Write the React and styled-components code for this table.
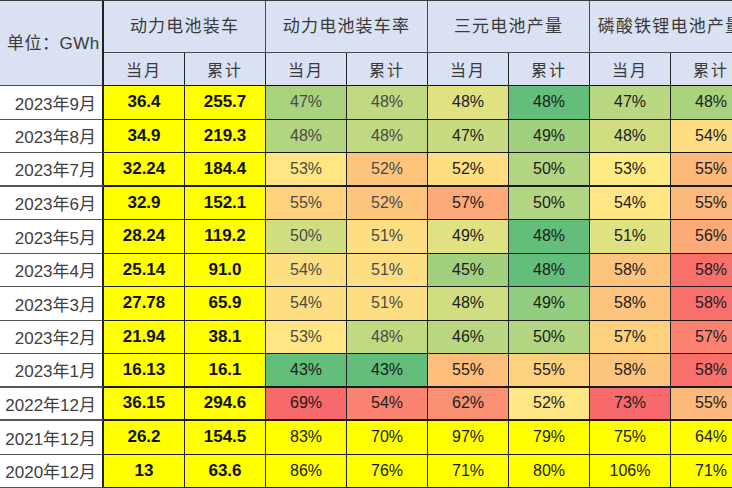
import React from 'react';
import styled, { createGlobalStyle, css } from 'styled-components';

const GlobalStyle = createGlobalStyle`
  body {
    margin: 0;
    overflow: hidden;
    background: #ffffff;
    font-family: "Liberation Sans", "Noto Sans CJK SC", sans-serif;
  }
`;

const groups = ['动力电池装车', '动力电池装车率', '三元电池产量', '磷酸铁锂电池产量'];

// tone: -1 green, 0 yellow, 1 red (excel style colour scale)
const rows = [
  { date: '2023年9月', month: '36.4', total: '255.7', rates: [['47%', -0.55], ['48%', -0.4], ['48%', -0.2], ['48%', -1], ['47%', -0.45], ['48%', -0.55]] },
  { date: '2023年8月', month: '34.9', total: '219.3', rates: [['48%', -0.5], ['48%', -0.4], ['47%', -0.35], ['49%', -0.6], ['48%', -0.3], ['54%', 0.1]] },
  { date: '2023年7月', month: '32.24', total: '184.4', heavy: true, rates: [['53%', 0.05], ['52%', 0.3], ['52%', 0.1], ['50%', -0.5], ['53%', 0], ['55%', 0.4]] },
  { date: '2023年6月', month: '32.9', total: '152.1', rates: [['55%', 0.2], ['52%', 0.3], ['57%', 0.5], ['50%', -0.5], ['54%', 0.05], ['55%', 0.4]] },
  { date: '2023年5月', month: '28.24', total: '119.2', rates: [['50%', -0.3], ['51%', 0.1], ['49%', -0.2], ['48%', -1], ['51%', -0.2], ['56%', 0.5]] },
  { date: '2023年4月', month: '25.14', total: '91.0', rates: [['54%', 0.1], ['51%', 0.1], ['45%', -0.6], ['48%', -1], ['58%', 0.3], ['58%', 0.95]] },
  { date: '2023年3月', month: '27.78', total: '65.9', rates: [['54%', 0.1], ['51%', 0.1], ['48%', -0.3], ['49%', -0.7], ['58%', 0.3], ['58%', 0.95]] },
  { date: '2023年2月', month: '21.94', total: '38.1', rates: [['53%', 0.05], ['48%', -0.4], ['46%', -0.45], ['50%', -0.5], ['57%', 0.2], ['57%', 0.8]] },
  { date: '2023年1月', month: '16.13', total: '16.1', heavy: true, dark: true, rates: [['43%', -1], ['43%', -1], ['55%', 0.35], ['55%', 0.2], ['58%', 0.3], ['58%', 0.95]] },
  { date: '2022年12月', month: '36.15', total: '294.6', heavy: true, dark: true, rates: [['69%', 1], ['54%', 0.8], ['62%', 0.7], ['52%', 0.05], ['73%', 1], ['55%', 0.4]] },
  { date: '2021年12月', month: '26.2', total: '154.5', dark: true, rates: [['83%'], ['70%'], ['97%'], ['79%'], ['75%'], ['64%']] },
  { date: '2020年12月', month: '13', total: '63.6', dark: true, rates: [['86%'], ['76%'], ['71%'], ['80%'], ['106%'], ['71%']] },
];

const GREEN = [0x63, 0xbe, 0x7b];
const YELLOW = [0xff, 0xeb, 0x84];
const RED = [0xf8, 0x69, 0x6b];

const toneColor = (tone) => {
  if (tone === undefined) return '#ffff00';
  const from = tone < 0 ? GREEN : RED;
  const t = 1 - Math.abs(tone);
  const c = from.map((v, i) => Math.round(v + (YELLOW[i] - v) * t));
  return `rgb(${c.join(',')})`;
};

const Sheet = styled.div`
  display: grid;
  grid-template-columns: 104px repeat(8, 81px);
  grid-template-rows: 52px 33px repeat(12, 33.5px);
  width: 752px;
  border-top: 1px solid #3a3a3a;
`;

const Cell = styled.div`
  box-sizing: border-box;
  display: flex;
  align-items: center;
  justify-content: center;
  border-right: 1px solid #222;
  border-bottom: ${(p) => (p.$heavy ? '2px' : '1px')} solid #1a1a1a;
  font-size: 17px;
  white-space: nowrap;
  overflow: hidden;
`;

const HeadCell = styled(Cell)`
  background: #d9e1f2;
  color: #3a3a3a;
  border-right-color: #4a4a4a;
  border-bottom-color: #4a4a4a;
`;

const Corner = styled(HeadCell)`
  grid-row: span 2;
  justify-content: flex-start;
  padding-left: 7px;
  padding-bottom: 4px;
  border-right: 2px solid #222;
  letter-spacing: 0.5px;
`;

const GroupHead = styled(HeadCell)`
  grid-column: span 2;
  letter-spacing: 1.2px;
  padding-bottom: 4px;
`;

const SubHead = styled(HeadCell)`
  font-size: 16px;
  letter-spacing: 2px;
  border-right-color: #222;
  border-bottom: 1px solid #111;
`;

const DateCell = styled(Cell)`
  justify-content: flex-end;
  padding-right: 6px;
  background: #ffffff;
  color: #404040;
  border-right: 2px solid #222;
  border-bottom-color: #555;
`;

const ValueCell = styled(Cell)`
  background: #ffff00;
  color: #111;
  font-weight: bold;
`;

const RateCell = styled(Cell)`
  font-size: 16px;
  background: ${(p) => toneColor(p.$tone)};
  color: #1c1c1c;
  ${(p) =>
    p.$soft &&
    css`
      color: #4a4a4a;
    `}
`;

export default function App() {
  return (
    <>
      <GlobalStyle />
      <Sheet>
        <Corner>单位：GWh</Corner>
        {groups.map((g) => (
          <GroupHead key={g}>{g}</GroupHead>
        ))}
        {groups.map((g) => (
          <React.Fragment key={g}>
            <SubHead>当月</SubHead>
            <SubHead>累计</SubHead>
          </React.Fragment>
        ))}
        {rows.map((r) => (
          <React.Fragment key={r.date}>
            <DateCell $heavy={r.heavy}>{r.date}</DateCell>
            <ValueCell $heavy={r.heavy}>{r.month}</ValueCell>
            <ValueCell $heavy={r.heavy}>{r.total}</ValueCell>
            {r.rates.map(([text, tone], i) => (
              <RateCell key={i} $tone={tone} $heavy={r.heavy} $soft={i < 2 && !r.dark}>
                {text}
              </RateCell>
            ))}
          </React.Fragment>
        ))}
      </Sheet>
    </>
  );
}
